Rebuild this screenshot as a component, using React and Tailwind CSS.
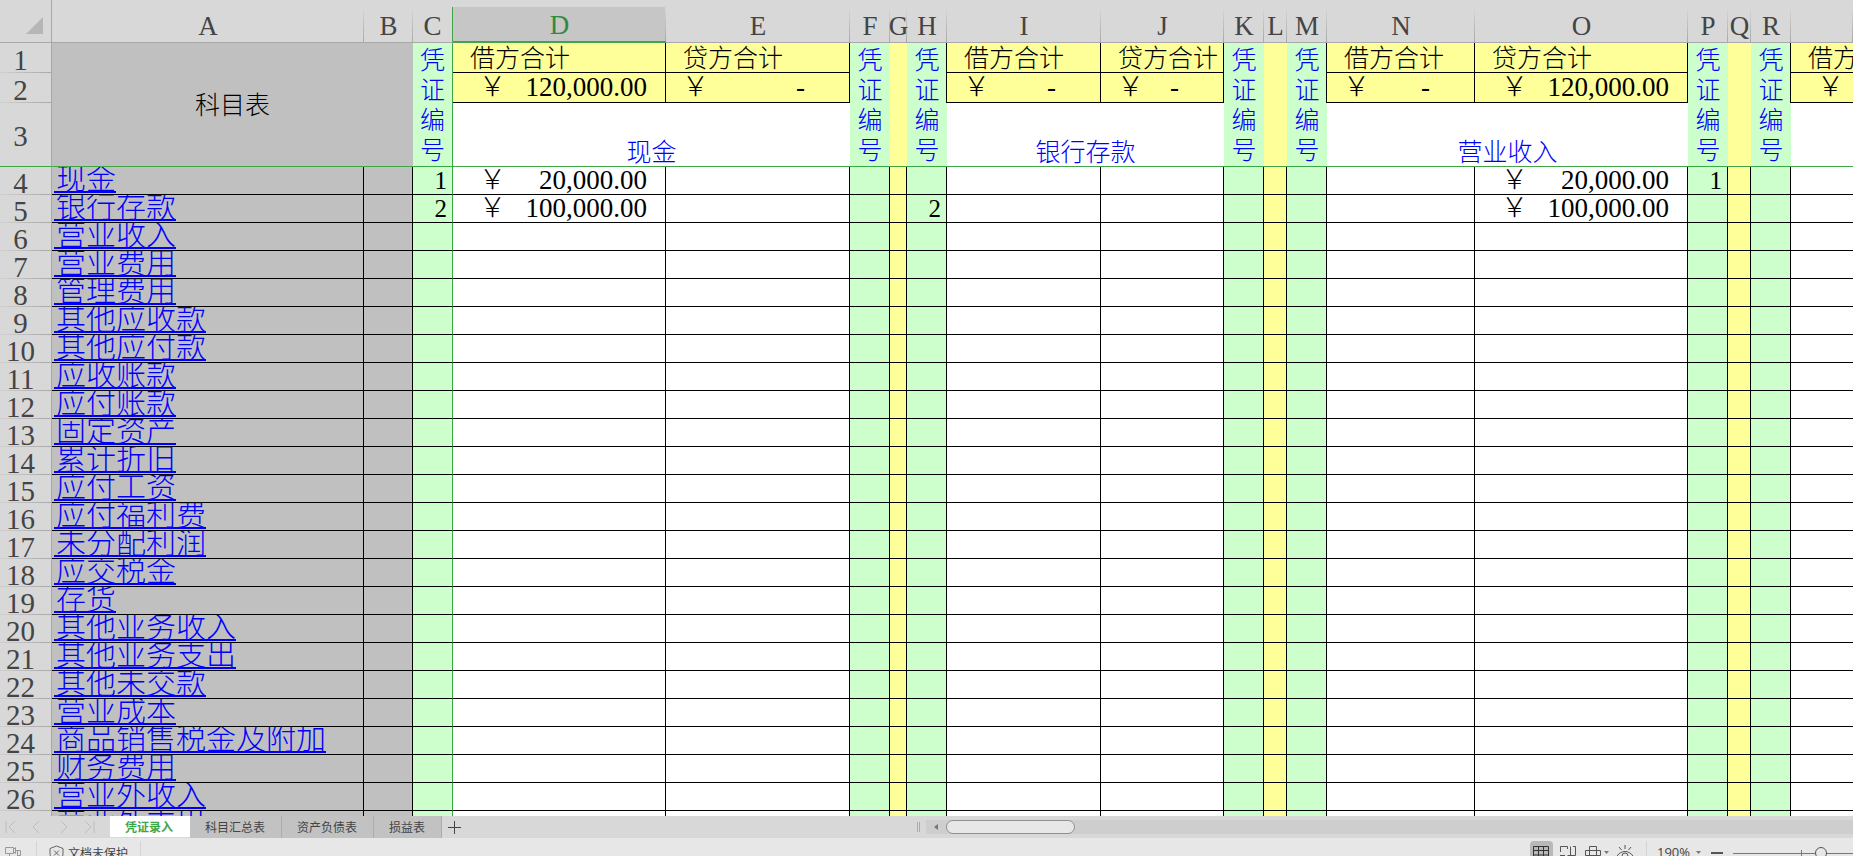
import { useState } from "react";
import clsx from "clsx";

const accounts = [
  "现金", "银行存款", "营业收入", "营业费用", "管理费用", "其他应收款", "其他应付款",
  "应收账款", "应付账款", "固定资产", "累计折旧", "应付工资", "应付福利费", "未分配利润",
  "应交税金", "存货", "其他业务收入", "其他业务支出", "其他未交款", "营业成本",
  "商品销售税金及附加", "财务费用", "营业外收入", "营业外支出",
];

const columns = [
  { id: "A", width: "w-[312px]", kind: "name" },
  { id: "B", width: "w-[49px]", kind: "gray" },
  { id: "C", width: "w-[40px]", kind: "no", frozen: true },
  { id: "D", width: "w-[213px]", kind: "money", active: true },
  { id: "E", width: "w-[184px]", kind: "money" },
  { id: "F", width: "w-[40px]", kind: "no" },
  { id: "G", width: "w-[17px]", kind: "gap" },
  { id: "H", width: "w-[40px]", kind: "no" },
  { id: "I", width: "w-[154px]", kind: "money" },
  { id: "J", width: "w-[123px]", kind: "money" },
  { id: "K", width: "w-[40px]", kind: "no" },
  { id: "L", width: "w-[23px]", kind: "gap" },
  { id: "M", width: "w-[40px]", kind: "no" },
  { id: "N", width: "w-[148px]", kind: "money" },
  { id: "O", width: "w-[213px]", kind: "money" },
  { id: "P", width: "w-[40px]", kind: "no" },
  { id: "Q", width: "w-[23px]", kind: "gap" },
  { id: "R", width: "w-[40px]", kind: "no" },
  { id: "", width: "", kind: "money" },
];

const totals = {
  D: "120,000.00",
  E: "-",
  I: "-",
  J: "-",
  N: "-",
  O: "120,000.00",
  "": "",
};

const entries = {
  4: { C: "1", D: "20,000.00", O: "20,000.00", P: "1" },
  5: { C: "2", D: "100,000.00", H: "2", O: "100,000.00" },
};

const titles = [
  { name: "现金", span: 2 },
  { name: "银行存款", span: 2 },
  { name: "营业收入", span: 2 },
  { name: "", span: 1 },
];

const sheets = ["凭证录入", "科目汇总表", "资产负债表", "损益表"];

const fills = {
  name: "bg-[#c0c0c0]",
  gray: "bg-[#c0c0c0]",
  no: "bg-[#ccffcc]",
  gap: "bg-[#ffff99]",
  money: "bg-white",
};

function Money({ value }) {
  const wide = value !== "-";
  return (
    <div
      className={clsx(
        "flex justify-between text-[27px] leading-[27px]",
        wide ? "pl-[26px] pr-[18px]" : "pl-4 pr-11"
      )}
    >
      <span>￥</span>
      <span>{value}</span>
    </div>
  );
}

function RowHeader({ n, frozen }) {
  return (
    <th
      scope="row"
      className={clsx(
        "border-r border-r-[#a8a8a8] p-0 pr-[10px] pt-[3px] text-center align-middle text-[29px] font-normal leading-6 text-[#444]",
        frozen
          ? "border-b border-b-[#3fa648]"
          : "bg-[linear-gradient(to_right,#d0d0d0,#a8a8a8)] bg-[length:100%_1px] bg-bottom bg-no-repeat"
      )}
    >
      {n}
    </th>
  );
}

function ColumnHeader({ col }) {
  return (
    <th
      scope="col"
      className={clsx(
        "border-b p-0 pt-[7px] align-top font-normal",
        col.active ? "border-b-[#3fa648]" : "border-b-[#a8a8a8]"
      )}
    >
      <div
        className={clsx(
          "flex h-[35px] items-end justify-center text-[27px] leading-8",
          col.active
            ? "border-b border-b-[#3fa648] bg-[#c6c6c6] text-[#2f8a42]"
            : "text-[#444]",
          col.frozen
            ? "border-r border-r-[#3fa648]"
            : "bg-[linear-gradient(to_bottom,#d8d8d8,#a8a8a8)] bg-[length:1px_100%] bg-right bg-no-repeat"
        )}
      >
        {col.id}
      </div>
    </th>
  );
}

function SheetGrid() {
  return (
    <table className="w-full table-fixed border-separate border-spacing-0 text-[25px] text-black">
      <colgroup>
        <col className="w-[52px]" />
        {columns.map((col) => (
          <col key={col.id} className={col.width} />
        ))}
      </colgroup>
      <thead>
        <tr className="h-[43px]">
          <th className="border-b border-r border-[#a8a8a8] p-0">
            <button aria-label="全选" className="flex w-full justify-end pr-2 pt-2">
              <svg width="17" height="17" viewBox="0 0 17 17">
                <path d="M17 0V17H0Z" fill="#b6b6b6" />
              </svg>
            </button>
          </th>
          {columns.map((col) => (
            <ColumnHeader key={col.id} col={col} />
          ))}
        </tr>
      </thead>
      <tbody>
        <tr className="h-[30px]">
          <RowHeader n={1} />
          <td rowSpan={3} colSpan={2} className="border-b border-b-[#3fa648] bg-[#c0c0c0] p-0 pt-[2px] text-center align-middle">
            科目表
          </td>
          {columns.slice(2).map((col, i) => {
            if (col.kind === "money") {
              return (
                <td
                  key={col.id}
                  className={clsx(
                    "whitespace-nowrap border-b border-r border-black bg-[#ffff99] p-0 pl-[17px] pt-[2px] leading-[27px] last:border-r-0",
                    !col.active && "shadow-[-1px_0_0_#000]"
                  )}
                >
                  {i > 0 && columns[i + 1].kind === "money" ? "贷方合计" : "借方合计"}
                </td>
              );
            }
            return (
              <td
                key={col.id}
                rowSpan={3}
                className={clsx(
                  "border-b border-b-[#3fa648] p-0 pt-[2px] text-center align-middle leading-[30px] text-[#0000ff]",
                  fills[col.kind],
                  col.frozen && "border-r border-r-[#3fa648]"
                )}
              >
                {col.kind === "no" && "凭证编号"}
              </td>
            );
          })}
        </tr>
        <tr className="h-[30px]">
          <RowHeader n={2} />
          {columns
            .filter((col) => col.kind === "money")
            .map((col) => (
              <td
                key={col.id}
                className={clsx(
                  "border-b border-r border-black bg-[#ffff99] p-0 last:border-r-0",
                  !col.active && "shadow-[-1px_0_0_#000]"
                )}
              >
                <Money value={totals[col.id]} />
              </td>
            ))}
        </tr>
        <tr className="h-16">
          <RowHeader n={3} frozen />
          {titles.map((title) => (
            <td
              key={title.name}
              colSpan={title.span}
              className="border-b border-b-[#3fa648] bg-white p-0 text-center align-bottom leading-[26px] text-[#0000ff]"
            >
              {title.name}
            </td>
          ))}
        </tr>
        {accounts.map((account, i) => {
          const n = i + 4;
          const row = entries[n] || {};
          return (
            <tr key={account} className="h-7">
              <RowHeader n={n} />
              {columns.map((col) => (
                <td
                  key={col.id}
                  className={clsx(
                    "border-b border-r border-black p-0 last:border-r-0",
                    fills[col.kind],
                    col.frozen && "border-r-[#3fa648]"
                  )}
                >
                  {col.kind === "name" && (
                    <div className="flex h-[27px] items-start overflow-hidden pl-[2px] text-[30px]">
                      <a
                        href={`#${account}`}
                        className="h-[26px] border-b-2 border-[#0000ff] pl-[2px] leading-6 text-[#0000ff]"
                      >
                        {account}
                      </a>
                    </div>
                  )}
                  {col.kind === "no" && row[col.id] && (
                    <div className="pr-[5px] text-right leading-[27px]">{row[col.id]}</div>
                  )}
                  {col.kind === "money" && row[col.id] && <Money value={row[col.id]} />}
                </td>
              ))}
            </tr>
          );
        })}
      </tbody>
    </table>
  );
}

const navIcons = [
  { label: "第一张", d: "M1 1V13M10 1L4 7L10 13" },
  { label: "上一张", d: "M8 1L2 7L8 13" },
  { label: "下一张", d: "M4 1L10 7L4 13" },
  { label: "最后一张", d: "M2 1L8 7L2 13M11 1V13" },
];

function TabBar() {
  const [active, setActive] = useState(sheets[0]);
  return (
    <div className="flex h-[22px] shrink-0 items-stretch bg-[#d8d8d8] text-xs">
      <div className="flex w-[110px] items-center gap-[14px] pl-[5px]">
        {navIcons.map((icon) => (
          <button key={icon.label} aria-label={icon.label}>
            <svg width="12" height="14" viewBox="0 0 12 14" fill="none" stroke="#bcbcbc">
              <path d={icon.d} />
            </svg>
          </button>
        ))}
      </div>
      {sheets.map((name) => (
        <button
          key={name}
          onClick={() => setActive(name)}
          className={clsx(
            "border-r pl-[15px] pr-4",
            name === active
              ? "mb-px border-white bg-white font-bold text-[#3fa648]"
              : "border-[#acacac] bg-[#c2c2c2] text-[#444]"
          )}
        >
          {name}
        </button>
      ))}
      <button aria-label="新建工作表" className="px-[6px]">
        <svg width="13" height="13" viewBox="0 0 13 13" stroke="#444" fill="none">
          <path d="M6.5 0V13M0 6.5H13" />
        </svg>
      </button>
      <div className="ml-auto flex w-[936px] items-center">
        <div className="mr-[6px] h-[10px] w-[3px] border-x border-[#acacac]" />
        <div className="flex h-[14px] flex-1 items-center bg-[#cecece] pl-2">
          <button aria-label="向左滚动">
            <svg width="4" height="6" viewBox="0 0 4 6">
              <path d="M4 0V6L0 3Z" fill="#777" />
            </svg>
          </button>
          <div className="ml-2 h-[14px] w-[129px] rounded-full border border-[#8f8f8f] bg-[#e7e7e7]" />
        </div>
      </div>
    </div>
  );
}

function StatusBar() {
  const [zoom, setZoom] = useState(76);
  return (
    <div className="h-[18px] shrink-0 overflow-hidden bg-[#e7e7e7] text-xs text-[#444]">
      <div className="flex h-7 items-center pt-px">
        <button aria-label="录制" className="ml-[5px] w-[31px]">
          <svg width="17" height="16" viewBox="0 0 17 16" fill="none" stroke="#999">
            <path d="M.5 2.500H8.500V8.500H.5ZM8.500 4.500L10.500 2.500V8.500L8.500 6.500M4.500 8.500V12.500M2 12.500H7M10.500 5.500H15.500V10.500H12.500V5.500M12.500 10.500V15" />
          </svg>
        </button>
        <div className="h-6 w-px bg-[#d4d4d4]" />
        <button className="flex items-center gap-1 pl-3 pr-3">
          <svg width="15" height="16" viewBox="0 0 15 16" fill="none" stroke="#666">
            <path d="M7.500 1L14 3.500V9C14 12 11 14 7.500 15.500C4 14 1 12 1 9V3.500ZM5 5.500L10 10.500M10 5.500L5 10.500" />
          </svg>
          文档未保护
        </button>
        <div className="h-6 w-px bg-[#d4d4d4]" />
        <div className="ml-auto flex items-center">
          <button aria-label="普通视图" className="flex h-6 w-[23px] items-center justify-center rounded-sm bg-[#b8b8b8]">
            <svg width="16" height="14" viewBox="0 0 16 14" fill="none" stroke="#333">
              <path d="M.5.5H15.500V13.500H.5ZM.5 4.500H15.500M.5 9H15.500M5.500.5V13.500M10.500.5V13.500" />
            </svg>
          </button>
          <button aria-label="分页预览" className="ml-[7px]">
            <svg width="16" height="14" viewBox="0 0 16 14" fill="none" stroke="#555">
              <path d="M.5 6V.5H7.500V3M10.500 .5V9.500M13 .5H15.500V9.500H7.500M0 9.500H5M10.500 9.500V13" />
            </svg>
          </button>
          <button aria-label="页面布局" className="ml-[9px] flex items-center gap-[3px]">
            <svg width="16" height="14" viewBox="0 0 16 14" fill="none" stroke="#555">
              <path d="M4.500 .5H11.500V13.500H4.500ZM.5 4.500H15.500V9.500H.5Z" />
            </svg>
            <svg width="5" height="3" viewBox="0 0 5 3">
              <path d="M0 0H5L2.500 3Z" fill="#777" />
            </svg>
          </button>
          <button aria-label="护眼模式" className="ml-2 mr-[13px]">
            <svg width="16" height="16" viewBox="0 0 16 16" fill="none" stroke="#555">
              <path d="M0 11C4 5 12 5 16 11M8 0V4M2 2L4.500 5M14 2L11.500 5" />
              <circle cx="8" cy="11" r="3" />
            </svg>
          </button>
          <div className="h-6 w-px bg-[#d4d4d4]" />
          <button className="flex items-center gap-[6px] pl-[10px] font-['Open_Sans',sans-serif] text-[13px]">
            190%
            <svg width="5" height="3" viewBox="0 0 5 3">
              <path d="M0 0H5L2.500 3Z" fill="#777" />
            </svg>
          </button>
          <button aria-label="缩小" className="ml-[10px] h-[2px] w-3 bg-[#555]" />
          <input
            type="range"
            aria-label="缩放"
            value={zoom}
            onChange={(e) => setZoom(Number(e.target.value))}
            className="ml-[10px] h-4 w-[120px] appearance-none bg-[linear-gradient(#777,#777),linear-gradient(#777,#777)] bg-[length:100%_1px,1px_6px] bg-[position:0_8px,68px_5px] bg-no-repeat [&::-webkit-slider-thumb]:size-3 [&::-webkit-slider-thumb]:appearance-none [&::-webkit-slider-thumb]:rounded-full [&::-webkit-slider-thumb]:border [&::-webkit-slider-thumb]:border-[#555] [&::-webkit-slider-thumb]:bg-[#e7e7e7]"
          />
        </div>
      </div>
    </div>
  );
}

export default function App() {
  return (
    <div className="flex h-screen flex-col overflow-hidden bg-[#d8d8d8] font-['Liberation_Serif','Noto_Sans_CJK_SC',serif]">
      <main className="min-h-0 flex-1 overflow-hidden font-light">
        <SheetGrid />
      </main>
      <footer className="shrink-0 font-['Noto_Sans_CJK_SC',sans-serif]">
        <TabBar />
        <StatusBar />
      </footer>
    </div>
  );
}
